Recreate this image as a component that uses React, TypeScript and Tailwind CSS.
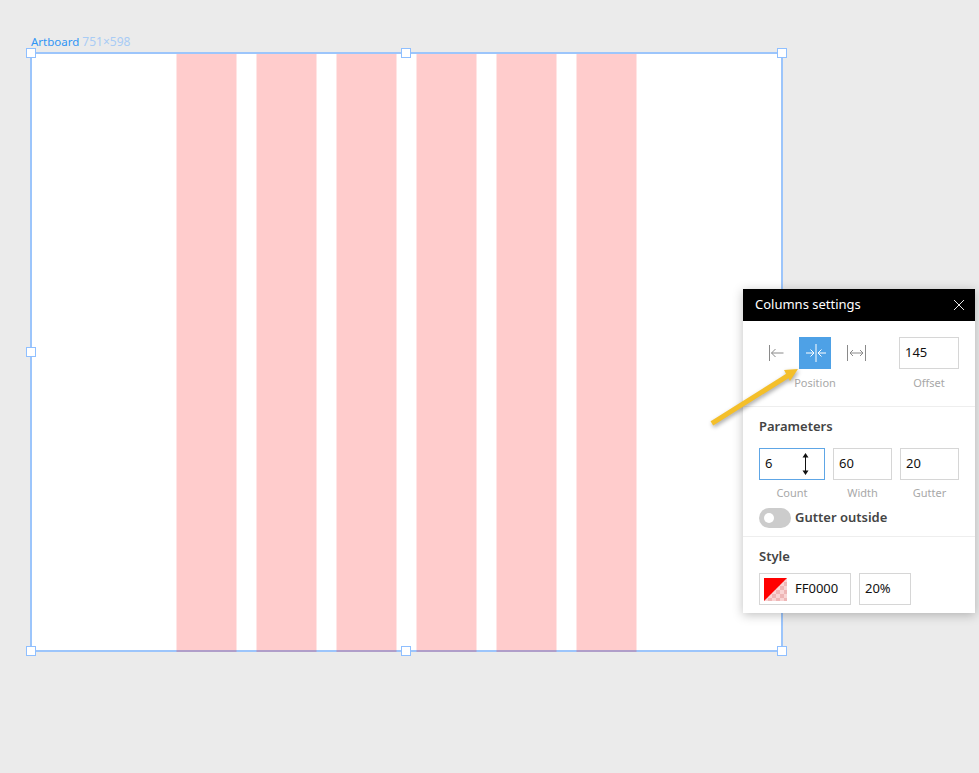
const font = "font-['Noto_Sans','Open_Sans',sans-serif]";

function Handle({ className }: { className: string }) {
  return <div className={`absolute h-[10px] w-[10px] border border-[#8fbfff] bg-white ${className}`} />;
}

function Field({ value, className = "" }: { value: string; className?: string }) {
  return (
    <div className={`flex h-8 items-center border border-[#d6d6d6] pl-[5px] text-[13px] text-[#111] ${className}`}>
      {value}
    </div>
  );
}

function Label({ text, className = "" }: { text: string; className?: string }) {
  return <div className={`text-center text-[11px] leading-4 text-[#a8a8a8] ${className}`}>{text}</div>;
}

export default function App() {
  return (
    <div className={`relative h-[773px] w-[979px] overflow-hidden bg-[#ebebeb] ${font}`}>
      <div className="pl-[30px] pt-[35px]">
        <div className="h-[17px] pl-[1px] text-[11.500px] leading-[14px]">
          <span className="text-[#2f95f5]">Artboard</span>{" "}
          <span className="text-[12px] text-[#a9ccf5]">751×598</span>
        </div>

        <div className="relative h-[600px] w-[753px] border-2 border-[#9cc5fb] bg-white">
          <div className="flex h-[calc(100%+2px)] gap-[19px] pl-[144px]">
            {[0, 1, 2, 3, 4, 5].map((i) => (
              <div key={i} className="h-full w-[61px] border-x border-[#ff0000]/10 bg-[#ff0000]/20 bg-clip-padding" />
            ))}
          </div>
          <Handle className="-left-[6px] -top-[6px]" />
          <Handle className="left-[369px] -top-[6px]" />
          <Handle className="-right-[6px] -top-[6px]" />
          <Handle className="-left-[6px] top-[293px]" />
          <Handle className="-bottom-[6px] -left-[6px]" />
          <Handle className="-bottom-[6px] left-[369px]" />
          <Handle className="-bottom-[6px] -right-[6px]" />
        </div>
      </div>

      {/* settings panel */}
      <div className="absolute left-[743px] top-[289px] w-[232px] bg-white shadow-[0_2px_10px_rgba(0,0,0,0.25)]">
        <div className="flex h-8 items-center justify-between bg-black pl-3 pr-[10px] text-[13px] text-white">
          <span>Columns settings</span>
          <svg width="12" height="12" viewBox="0 0 12 12" stroke="#e8e8e8" strokeWidth="1">
            <path d="M1 1l10 10M11 1L1 11" />
          </svg>
        </div>

        <div className="flex h-[86px] border-b border-[#eeeeee] pl-4 pt-4">
          <div className="w-[122px] shrink-0">
            <div className="flex h-8 items-center">
              <div className="flex w-10 pl-[9px]">
                <svg width="16" height="18" viewBox="0 0 16 18" fill="none" stroke="#8a8a8a" strokeWidth="1">
                  <path d="M1.500 1v16M15.500 9H3.500M7.500 5l-4 4 4 4" />
                </svg>
              </div>
              <div className="flex h-8 w-8 items-center justify-center bg-[#4ea1e6] pl-[1px]">
                <svg width="20" height="18" viewBox="0 0 20 18" fill="none" stroke="#ffffff" strokeWidth="1">
                  <path d="M10 0v18M0 9h8M4.500 5.500L8 9l-3.500 3.500M20 9h-8M15.500 5.500L12 9l3.500 3.500" />
                </svg>
              </div>
              <div className="flex w-[50px] justify-center">
                <svg width="19" height="18" viewBox="0 0 19 18" fill="none" stroke="#8a8a8a" strokeWidth="1">
                  <path d="M.5 1v16M18.500 1v16M3 9h13M6 6L3 9l3 3M13 6l3 3-3 3" />
                </svg>
              </div>
            </div>
            <Label text="Position" className="mr-[10px] mt-[6px]" />
          </div>
          <div className="ml-[18px] w-[60px]">
            <Field value="145" className="w-[60px]" />
            <Label text="Offset" className="mt-[6px]" />
          </div>
        </div>

        <div className="h-[130px] border-b border-[#eeeeee] pl-4 pt-[10px]">
          <div className="text-[13px] font-semibold leading-[18px] text-[#444]">Parameters</div>
          <div className="mt-[13px] flex gap-2">
            <div className="w-[66px]">
              <div className="flex h-8 items-center justify-between border border-[#5ea6e6] pl-[5px] pr-[15px] text-[13px] text-[#111]">
                <span>6</span>
                <svg width="7" height="22" viewBox="0 0 7 22" fill="none" stroke="#111" strokeWidth="1">
                  <path d="M3.500 1v20" />
                  <path d="M3.500 0L6.500 4.500H.5zM3.500 22L.5 17.500h6z" fill="#111" stroke="none" />
                </svg>
              </div>
              <Label text="Count" className="mt-[5px]" />
            </div>
            <div className="w-[59px]">
              <Field value="60" />
              <Label text="Width" className="mt-[5px]" />
            </div>
            <div className="w-[59px]">
              <Field value="20" />
              <Label text="Gutter" className="mt-[5px]" />
            </div>
          </div>
          <div className="mt-[7px] flex items-center gap-1">
            <div className="flex h-5 w-8 items-center rounded-full bg-[#cccccc] pl-[5px]">
              <div className="h-[10px] w-[10px] rounded-full bg-white" />
            </div>
            <span className="text-[13px] font-semibold text-[#444]">Gutter outside</span>
          </div>
        </div>

        <div className="h-[76px] pl-4 pt-[10px]">
          <div className="text-[13px] font-semibold leading-[18px] text-[#444]">Style</div>
          <div className="mt-[8px] flex gap-2">
            <div className="flex h-8 w-[92px] items-center border border-[#d6d6d6] pl-1 text-[13px] text-[#111]">
              <svg width="23" height="23" viewBox="0 0 23 23">
                <defs>
                  <pattern id="checker" width="8" height="8" patternUnits="userSpaceOnUse">
                    <rect width="8" height="8" fill="#f9d4d4" />
                    <rect width="4" height="4" fill="#eeb6b6" />
                    <rect x="4" y="4" width="4" height="4" fill="#eeb6b6" />
                  </pattern>
                </defs>
                <rect width="23" height="23" fill="url(#checker)" />
                <path d="M0 0h23L0 23z" fill="#ff0000" />
              </svg>
              <span className="ml-2">FF0000</span>
            </div>
            <Field value="20%" className="w-[52px]" />
          </div>
        </div>
      </div>

      {/* annotation arrow */}
      <svg className="absolute left-[705px] top-[360px]" width="100" height="72" viewBox="0 0 100 72" fill="none">
        <g style={{ filter: "drop-shadow(1px 2px 2px rgba(0,0,0,0.35))" }}>
          <path d="M9 62L84 15" stroke="#f4bf2a" strokeWidth="5" strokeLinecap="square" />
          <path d="M93 9L79 10L85 21z" fill="#f4bf2a" />
        </g>
      </svg>
    </div>
  );
}
